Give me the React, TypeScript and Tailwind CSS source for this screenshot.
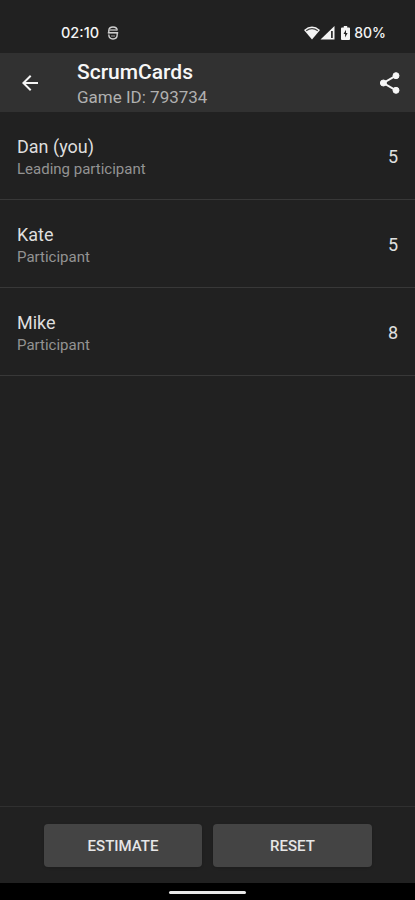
const players = [
  { name: 'Dan (you)', role: 'Leading participant', score: 5 },
  { name: 'Kate', role: 'Participant', score: 5 },
  { name: 'Mike', role: 'Participant', score: 8 },
];

function StatusBar() {
  return (
    <div className="flex h-[53px] shrink-0 items-center pt-3 pr-[29px] pl-[61px] font-['Inter','Roboto',sans-serif] text-[#f4f4f4]">
      <span className="w-[46px] text-[14.500px] leading-5 font-medium">02:10</span>
      <svg className="h-[14px] w-3" viewBox="0 0 12 14" fill="none" stroke="#d0d0d0">
        <path d="M1.800 6.500V4.500Q2 1 6 1T10.200 4.500" strokeWidth="1.400" />
        <path d="M2 4h8" strokeWidth="1.600" stroke="#a8a8a8" />
        <path d="M.8 6.800h10.400" strokeWidth="1.600" />
        <path d="M1.800 8.500Q1.800 13 6 13T10.200 8.500V7" strokeWidth="1.400" />
        <path d="M4 10h4" strokeWidth="1.200" stroke="#8c8c8c" />
      </svg>
      <svg className="ml-auto h-[14px] w-[31px]" viewBox="0 0 31 14">
        <path d="M0 4Q8 -2.800 16 4L8 13.500Z" fill="#f4f4f4" />
        <path d="M2.200 4.700Q8 .4 13.800 4.700" fill="none" stroke="#444" strokeWidth="1.200" />
        <path d="M16.500 13.500 30.500 0V13.500Z" fill="#f4f4f4" />
        <path d="M27 5h1.800v7H27Z" fill="#333" />
      </svg>
      <svg className="ml-[6px] h-[14px] w-[9px]" viewBox="0 0 9 14">
        <path d="M2.800 0h3.400v1.500H8q1 0 1 1V13q0 1-1 1H1q-1 0-1-1V2.500q0-1 1-1h1.800Z" fill="#f4f4f4" />
        <path d="M5 3.700 2.500 8h1.600v3.500L6.600 7H5Z" fill="#222" />
      </svg>
      <span className="ml-[4px] text-[14px] leading-5 font-medium">80%</span>
    </div>
  );
}

function Header() {
  return (
    <header className="flex h-[59px] shrink-0 items-center bg-[#313131] pr-[13px] pl-[18px]">
      <svg className="h-6 w-6" viewBox="0 0 24 24" fill="#f5f5f5">
        <path d="M20 11H7.830l5.590-5.590L12 4l-8 8 8 8 1.410-1.410L7.830 13H20z" />
      </svg>
      <div className="ml-[35px] pt-[4px]">
        <h1 className="text-[21px] leading-[26px] font-medium text-[#f7f7f7]">ScrumCards</h1>
        <p className="text-[17px] leading-[25px] text-[#b0b0b0]">Game ID: 793734</p>
      </div>
      <svg className="ml-auto h-6 w-6" viewBox="0 0 24 24" fill="#f7f7f7" stroke="#f7f7f7">
        <path d="M18 4.700 5.400 12 18 19.300" fill="none" strokeWidth="2" />
        <circle cx="18" cy="4.700" r="3" />
        <circle cx="5.400" cy="12" r="3" />
        <circle cx="18" cy="19.300" r="3" />
      </svg>
    </header>
  );
}

export default function App() {
  return (
    <div className="flex h-[900px] w-full flex-col overflow-hidden bg-[#212121] font-['Roboto','Noto_Sans',sans-serif]">
      <StatusBar />
      <Header />
      <main className="flex-1">
        {players.map((player) => (
          <div
            key={player.name}
            className="flex h-[88px] items-center justify-between border-b border-[#383838] pt-px pr-[17px] pl-[17px]"
          >
            <div className="pt-[3px]">
              <p className="text-[18px] leading-[22px] text-[#dedede]">{player.name}</p>
              <p className="text-[15px] leading-[22px] text-[#939393]">{player.role}</p>
            </div>
            <span className="text-[18px] text-[#e0e0e0]">{player.score}</span>
          </div>
        ))}
      </main>
      <footer className="flex h-[77px] shrink-0 gap-[11px] border-t border-[#303030] pt-[17px] pr-[43px] pl-11 text-[15px] font-medium text-[#e6e6e6]">
        <button className="h-[43px] w-[158px] rounded bg-[#444] pt-0.5 shadow-sm">ESTIMATE</button>
        <button className="h-[43px] w-[159px] rounded bg-[#444] pt-0.5 shadow-sm">RESET</button>
      </footer>
      <div className="flex h-[17px] shrink-0 justify-center bg-black pt-2">
        <div className="h-[3px] w-[77px] rounded-full bg-[#e8e8e8]" />
      </div>
    </div>
  );
}
